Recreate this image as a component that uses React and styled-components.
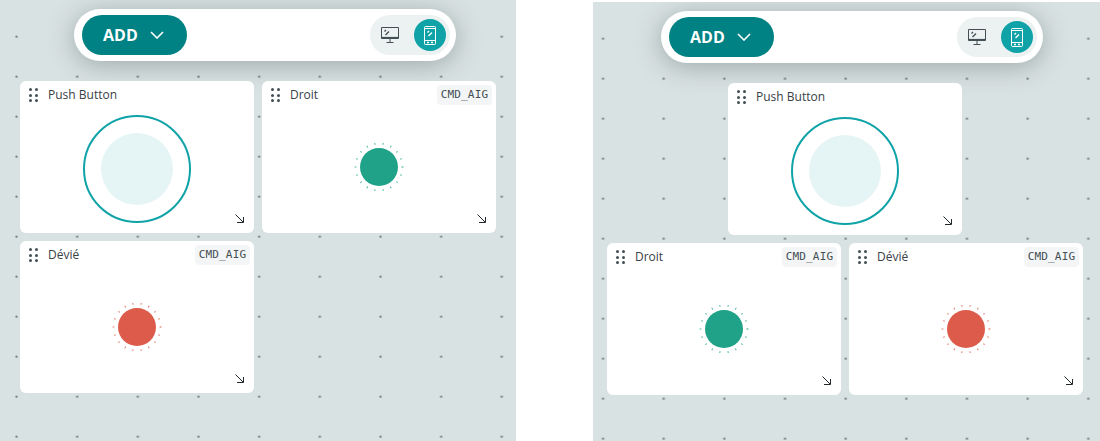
import React from 'react';

import styled, { createGlobalStyle } from 'styled-components';

const GlobalStyle = createGlobalStyle`
	html, body {
		margin: 0;
		padding: 0;
		background: #fff;
		font-family: "Open Sans", "Liberation Sans", sans-serif;
	}
`

const Page = styled.div`
	display: flex;
	align-items: flex-start;
	gap: 77px;
	width: 1100px;
	height: 441px;
	overflow: hidden;
`

const Pane = styled.div`
	flex: none;
	box-sizing: border-box;
	width: ${p => p.$width}px;
	height: 441px;
	margin-top: ${p => p.$top}px;
	padding-top: 9px;
	overflow: hidden;
	background-color: #d9e2e3;
	background-image: radial-gradient(circle at center, #77827f 1px, transparent 1.25px);
	background-size: 60.67px 40px;
	background-position: ${p => p.$dotX}px 16.7px;
`

const Toolbar = styled.div`
	display: flex;
	align-items: center;
	justify-content: space-between;
	box-sizing: border-box;
	width: 382px;
	height: 52px;
	margin-left: ${p => p.$left}px;
	padding: 0 6px 0 8px;
	background: #fff;
	border-radius: 26px;
	box-shadow: 0 4px 26px rgba(40, 60, 60, 0.34);
`

const AddButton = styled.div`
	display: flex;
	align-items: center;
	gap: 12px;
	box-sizing: border-box;
	width: 105px;
	height: 40px;
	padding-left: 21px;
	background: #008184;
	border-radius: 20px;
	color: #fff;
	font-size: 16px;
	font-weight: 700;
`

const ViewToggle = styled.div`
	display: flex;
	align-items: center;
	gap: 8px;
	box-sizing: border-box;
	width: 80px;
	height: 40px;
	padding: 0 4px;
	background: #ecf1f1;
	border-radius: 20px;
`

const ViewButton = styled.div`
	flex: none;
	display: flex;
	align-items: center;
	justify-content: center;
	width: 32px;
	height: 32px;
	border-radius: 50%;
	color: ${p => (p.$active ? '#fff' : '#434f54')};
	background: ${p => (p.$active ? '#0fa3a8' : 'transparent')};
`

const Grid = styled.div`
	display: flex;
	flex-direction: column;
	gap: 8px;
	width: 476px;
	margin: 20px 0 0 ${p => p.$left}px;
`

const Row = styled.div`
	display: flex;
	gap: 8px;
	justify-content: ${p => p.$justify || 'center'};
`

const Card = styled.div`
	position: relative;
	display: flex;
	flex-direction: column;
	width: 234px;
	height: 152px;
	background: #fff;
	border-radius: 6px;
`

const CardHeader = styled.div`
	display: flex;
	align-items: flex-start;
	height: 24px;
	flex: none;
	padding: 4px 4px 0 9px;
	box-sizing: border-box;
`

const Handle = styled.div`
	display: grid;
	grid-template-columns: repeat(2, 3px);
	grid-auto-rows: 3px;
	column-gap: 3px;
	row-gap: 2.5px;
	margin: 3px 10px 0 0;
	span {
		border-radius: 50%;
		background: #434f54;
	}
`

const Title = styled.div`
	flex: 1;
	margin-top: 1px;
	font-size: 12px;
	line-height: 17px;
	font-weight: 500;
	color: #374146;
`

const Tag = styled.div`
	width: 55px;
	height: 20px;
	text-align: center;
	background: #f4f5f6;
	border-radius: 4px;
	font-family: "DejaVu Sans Mono", "Liberation Mono", monospace;
	font-size: 11px;
	letter-spacing: 0.15px;
	line-height: 20px;
	color: #434f54;
`

const CardBody = styled.div`
	flex: 1;
	display: flex;
	align-items: center;
	justify-content: center;
	padding-bottom: ${p => p.$bottom || 0}px;
`

const Ring = styled.div`
	display: flex;
	align-items: center;
	justify-content: center;
	box-sizing: border-box;
	width: 108px;
	height: 108px;
	border: 2px solid #0fa3a8;
	border-radius: 50%;
`

const RingCore = styled.div`
	width: 72px;
	height: 72px;
	border-radius: 50%;
	background: #e5f4f5;
`

const ResizeMark = styled.svg`
	position: absolute;
	right: 10px;
	bottom: 10px;
`

const dots = [0, 1, 2, 3, 4, 5]
const ticks = Array.from({ length: 18 }, (_, i) => i * 20)

const MonitorIcon = () => (
	<svg width="18" height="16" viewBox="0 0 18 16" fill="none" stroke="currentColor" strokeWidth="1">
		<path d="M0.5 0.5H17.5V11.5H0.5Z" />
		<path d="M0.5 10.5H17.5" strokeWidth="1.2" />
		<path d="M9 11.5V15M5.5 15.5H12.5" />
		<path d="M3.5 4.5L5 3M4.5 8L8 4.5" strokeWidth="1.3" />
	</svg>
)

const PhoneIcon = () => (
	<svg width="12" height="19" viewBox="0 0 12 19" fill="none" stroke="currentColor" strokeWidth="1">
		<rect x="0.5" y="0.5" width="11" height="18" rx="1" />
		<path d="M0.5 2.5H11.5M0.5 14.5H11.5" />
		<path d="M3.5 6.5L5 5M4.5 10L8 6.5" strokeWidth="1.3" />
		<path d="M3 16.5H5M7 16.5H9" strokeWidth="1.4" />
	</svg>
)

const Led = ({ color }) => (
	<svg width="52" height="52" viewBox="0 0 52 52">
		<circle cx="26" cy="26" r="19" fill={color} />
		{ticks.map(a => (
			<line
				key={a}
				x1="48.6"
				y1="26"
				x2="50.4"
				y2="26"
				stroke={color}
				strokeWidth="1"
				opacity={a === 0 ? 1 : 0.8}
				transform={`rotate(${a} 26 26)`}
			/>
		))}
	</svg>
)

const WidgetCard = ({ title, tag, children, bottom }) => (
	<Card>
		<CardHeader>
			<Handle>{dots.map(d => <span key={d} />)}</Handle>
			<Title>{title}</Title>
			{tag && <Tag>{tag}</Tag>}
		</CardHeader>
		<CardBody $bottom={bottom}>{children}</CardBody>
		<ResizeMark width="9" height="9" viewBox="0 0 9 9" fill="none" stroke="#20282b" strokeWidth="1">
			<path d="M0.5 0.5L8 8M8.5 3V8.5H2" />
		</ResizeMark>
	</Card>
)

const PushButton = () => (
	<WidgetCard title="Push Button">
		<Ring><RingCore /></Ring>
	</WidgetCard>
)

const Straight = () => (
	<WidgetCard title="Droit" tag="CMD_AIG" bottom={4}>
		<Led color="#1fa287" />
	</WidgetCard>
)

const Diverted = () => (
	<WidgetCard title="Dévié" tag="CMD_AIG" bottom={4}>
		<Led color="#dc5b4a" />
	</WidgetCard>
)

const Bar = ({ left }) => (
	<Toolbar $left={left}>
		<AddButton>
			ADD
			<svg width="14" height="8" viewBox="0 0 14 8" fill="none" stroke="#fff" strokeWidth="1.6">
				<path d="M1 1L7 7L13 1" />
			</svg>
		</AddButton>
		<ViewToggle>
			<ViewButton><MonitorIcon /></ViewButton>
			<ViewButton $active><PhoneIcon /></ViewButton>
		</ViewToggle>
	</Toolbar>
)

const App = () => {
	return (
		<Page>
			<GlobalStyle />
			<Pane $width={516} $top={0} $dotX={-13.8}>
				<Bar left={74} />
				<Grid $left={20}>
					<Row>
						<PushButton />
						<Straight />
					</Row>
					<Row $justify="flex-start">
						<Diverted />
					</Row>
				</Grid>
			</Pane>
			<Pane $width={507} $top={2} $dotX={-20.3}>
				<Bar left={68} />
				<Grid $left={14}>
					<Row>
						<PushButton />
					</Row>
					<Row>
						<Straight />
						<Diverted />
					</Row>
				</Grid>
			</Pane>
		</Page>
	)
}

export default App;
